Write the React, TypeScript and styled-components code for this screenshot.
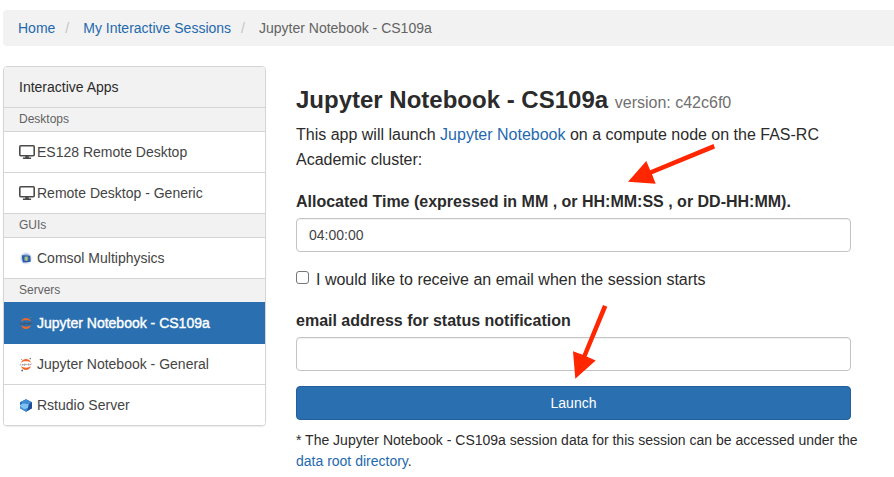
import React from "react";
import styled, { createGlobalStyle } from "styled-components";

const GlobalStyle = createGlobalStyle`
  *, *::before, *::after { box-sizing: border-box; }
  body {
    margin: 0;
    background: #fff;
    color: #2b2b2b;
    font-family: "Helvetica Neue", "Liberation Sans", Arial, sans-serif;
    font-size: 16px;
    line-height: 25px;
  }
  input, button { font-family: inherit; }
`;

const Page = styled.div`
  padding: 10px 0 0 3px;
`;

const Link = styled.a`
  color: #2469ae;
  text-decoration: none;
  &:hover { text-decoration: underline; }
`;

const Breadcrumb = styled.ol`
  display: flex;
  margin: 0 0 20px;
  padding: 8px 15px;
  list-style: none;
  background: #f2f2f2;
  border-radius: 4px 0 0 4px;
  font-size: 14px;
  line-height: 20px;
`;

const Crumb = styled.li`
  color: #636363;
  & + &::before {
    content: "/";
    padding: 0 14px 0 10px;
    color: #c4c4c4;
  }
`;

const Columns = styled.div`
  display: grid;
  grid-template-columns: 263px minmax(0, 1fr);
  gap: 30px;
  align-items: start;
  padding-right: 43px;
`;

const Panel = styled.nav`
  border: 1px solid #d5d5d5;
  border-radius: 4px;
  overflow: hidden;
  font-size: 14px;
  line-height: 20px;
  box-shadow: 0 1px 1px rgba(0, 0, 0, 0.08);
`;

const PanelHeader = styled.div`
  padding: 10px 15px;
  background: #f2f2f2;
`;

const SectionTitle = styled.div`
  padding: 2px 15px 3px;
  border-top: 1px solid #d5d5d5;
  background: #f2f2f2;
  color: #636363;
  font-size: 12px;
  line-height: 18px;
`;

const AppLink = styled.a<{ $active?: boolean }>`
  display: flex;
  align-items: center;
  gap: 2px;
  padding: 10px 15px;
  border-top: 1px solid ${(p) => (p.$active ? "#2a6fb0" : "#d5d5d5")};
  background: ${(p) => (p.$active ? "#2a6fb0" : "#fff")};
  color: ${(p) => (p.$active ? "#fff" : "#444")};
  -webkit-text-stroke: ${(p) => (p.$active ? "0.4px #fff" : "0")};
  text-decoration: none;
  &[aria-current="page"] + & { border-top-color: #2a6fb0; }
`;

const Icon = styled.svg`
  flex: none;
  width: 16px;
  height: 16px;
`;

const Main = styled.main`
  position: relative;
  padding-top: 21px;
`;

const Heading = styled.h3`
  margin: 0 0 9px;
  font-size: 24px;
  font-weight: 700;
  line-height: 26px;
`;

const Version = styled.small`
  color: #707070;
  font-size: 16px;
  font-weight: 400;
  line-height: 1;
`;

const Intro = styled.p`
  margin: 0 0 17px;
`;

const FieldLabel = styled.label`
  display: block;
  margin-bottom: 4px;
  font-weight: 700;
`;

const TextInput = styled.input`
  display: block;
  width: 100%;
  height: 34px;
  margin-bottom: 15px;
  padding: 6px 12px;
  border: 1px solid #c4c4c4;
  border-radius: 4px;
  background: #fff;
  color: #444;
  font-size: 14px;
  box-shadow: inset 0 1px 1px rgba(0, 0, 0, 0.06);
`;

const CheckLabel = styled.label`
  display: flex;
  align-items: center;
  gap: 7px;
  margin-bottom: 16px;
`;

const Checkbox = styled.input`
  appearance: none;
  width: 13px;
  height: 13px;
  margin: 0 0 4px;
  border: 1px solid #767676;
  border-radius: 3px;
  background: #fff;
  &:checked { background: #2a6fb0; }
`;

const LaunchButton = styled.button`
  display: block;
  width: 100%;
  height: 34px;
  border: 1px solid #235f9a;
  border-radius: 4px;
  background: #2a6fb0;
  color: #fff;
  font-size: 14px;
  cursor: pointer;
`;

const Footnote = styled.p`
  margin: 10px -12px 0 0;
  font-size: 14px;
  line-height: 21px;
`;

const Arrow = styled.svg<{ $left: number; $top: number }>`
  position: absolute;
  left: ${(p) => p.$left}px;
  top: ${(p) => p.$top}px;
  fill: #ff2600;
  pointer-events: none;
`;

const DesktopIcon = () => (
  <Icon viewBox="0 0 16 16" aria-hidden="true">
    <rect x="0.8" y="1.7" width="14.4" height="10" rx="1" fill="none" stroke="#4a4a4a" strokeWidth="1.6" />
    <path d="M6.5 12h3l.4 1.5h2.2V15H3.9v-1.5h2.2z" fill="#4a4a4a" />
  </Icon>
);

const ComsolIcon = () => (
  <Icon viewBox="0 0 16 16" aria-hidden="true">
    <defs>
      <radialGradient id="comsol-halo">
        <stop offset="0.5" stopColor="#8aa5cf" />
        <stop offset="1" stopColor="#dfe5ee" stopOpacity="0" />
      </radialGradient>
      <linearGradient id="comsol-core">
        <stop offset="0" stopColor="#3a86c8" />
        <stop offset="0.5" stopColor="#cbd26a" />
        <stop offset="1" stopColor="#5d8a90" />
      </linearGradient>
    </defs>
    <circle cx="7" cy="8.3" r="6.8" fill="url(#comsol-halo)" />
    <path d="M2.8 5.2l8.4.5.5 6-7.8.7z" fill="#2b57b0" />
    <rect x="5" y="6.4" width="4.5" height="4.4" rx="1" fill="url(#comsol-core)" />
  </Icon>
);

const JupyterIcon = ({ active }: { active?: boolean }) => (
  <Icon viewBox="0 0 16 16" aria-hidden="true">
    <path d="M2 6.7C3.3 1.9 10.7 1.9 12 6.7 9.3 4.9 4.7 4.9 2 6.7z" fill="#f0692b" />
    <path d="M2 10.3c1.3 4.8 8.7 4.8 10 0-2.7 1.8-7.3 1.8-10 0z" fill="#f0692b" />
    <path
      d="M1.3 7.8v1.7M3 8v1.1h1.2V8M5.4 10V8h1.2v1.1M7.6 8v1.1M9 8h1.2v1.1H9zM11.5 9.2V8h1.2"
      fill="none"
      stroke={active ? "#46535f" : "#777"}
      strokeWidth={active ? 0.9 : 0.6}
    />
    <circle cx="11.3" cy="2.6" r="0.8" fill="#777" />
    <circle cx="2.7" cy="3.4" r="0.5" fill="#777" />
    <circle cx="3.2" cy="14.5" r="0.9" fill="#666" />
  </Icon>
);

const RstudioIcon = () => (
  <Icon viewBox="0 0 16 16" aria-hidden="true">
    <path d="M7 2.2l6 3v6L7 14.8l-6-3.6v-6z" fill="#2b67b7" />
    <path d="M7 2.2l6 3-3 2-6-1-3-1z" fill="#3e8bd5" />
    <path d="M4 6.2l6 1-1 4-4 1-4-1.5V8z" fill="#7fc2ef" />
    <path d="M10 7.2l3-2v6L7 14.8l2-3.6z" fill="#1e4d9a" />
    <path d="M1 9l4 3.2 4-1-2 3.6-6-3.6z" fill="#4290d8" />
  </Icon>
);

export default function App() {
  return (
    <>
      <GlobalStyle />
      <Page>
        <Breadcrumb aria-label="Breadcrumb">
          <Crumb><Link href="#home">Home</Link></Crumb>
          <Crumb><Link href="#sessions">My Interactive Sessions</Link></Crumb>
          <Crumb>Jupyter Notebook - CS109a</Crumb>
        </Breadcrumb>
        <Columns>
          <Panel aria-label="Interactive Apps">
            <PanelHeader>Interactive Apps</PanelHeader>
            <SectionTitle>Desktops</SectionTitle>
            <AppLink href="#es128"><DesktopIcon />ES128 Remote Desktop</AppLink>
            <AppLink href="#remote"><DesktopIcon />Remote Desktop - Generic</AppLink>
            <SectionTitle>GUIs</SectionTitle>
            <AppLink href="#comsol"><ComsolIcon />Comsol Multiphysics</AppLink>
            <SectionTitle>Servers</SectionTitle>
            <AppLink href="#cs109a" $active aria-current="page"><JupyterIcon active />Jupyter Notebook - CS109a</AppLink>
            <AppLink href="#general"><JupyterIcon />Jupyter Notebook - General</AppLink>
            <AppLink href="#rstudio"><RstudioIcon />Rstudio Server</AppLink>
          </Panel>
          <Main>
            <Heading>Jupyter Notebook - CS109a <Version>version: c42c6f0</Version></Heading>
            <Intro>
              This app will launch <Link href="#jupyter">Jupyter Notebook</Link> on a compute node on the FAS-RC Academic cluster:
            </Intro>
            <form onSubmit={(e) => e.preventDefault()}>
              <FieldLabel htmlFor="time">Allocated Time (expressed in MM , or HH:MM:SS , or DD-HH:MM).</FieldLabel>
              <TextInput id="time" type="text" defaultValue="04:00:00" />
              <CheckLabel>
                <Checkbox type="checkbox" />
                I would like to receive an email when the session starts
              </CheckLabel>
              <FieldLabel htmlFor="email">email address for status notification</FieldLabel>
              <TextInput id="email" type="email" />
              <LaunchButton type="submit">Launch</LaunchButton>
            </form>
            <Footnote>
              * The Jupyter Notebook - CS109a session data for this session can be accessed under the{" "}
              <Link href="#data">data root directory</Link>.
            </Footnote>
            <Arrow $left={332} $top={78} width="88" height="41" viewBox="0 0 88 41" aria-hidden="true">
              <path d="M85.5 0L87 4.5 24 30.3 27.7 39.7 0 37.7 18.3 17 22.2 26.3z" />
            </Arrow>
            <Arrow $left={277} $top={239} width="35" height="75" viewBox="0 0 35 75" aria-hidden="true">
              <path d="M30 0L34.3 1.8 13.6 51.5 22.7 55.5 2.3 73.7 0 46.2 9.6 49.8z" />
            </Arrow>
          </Main>
        </Columns>
      </Page>
    </>
  );
}
